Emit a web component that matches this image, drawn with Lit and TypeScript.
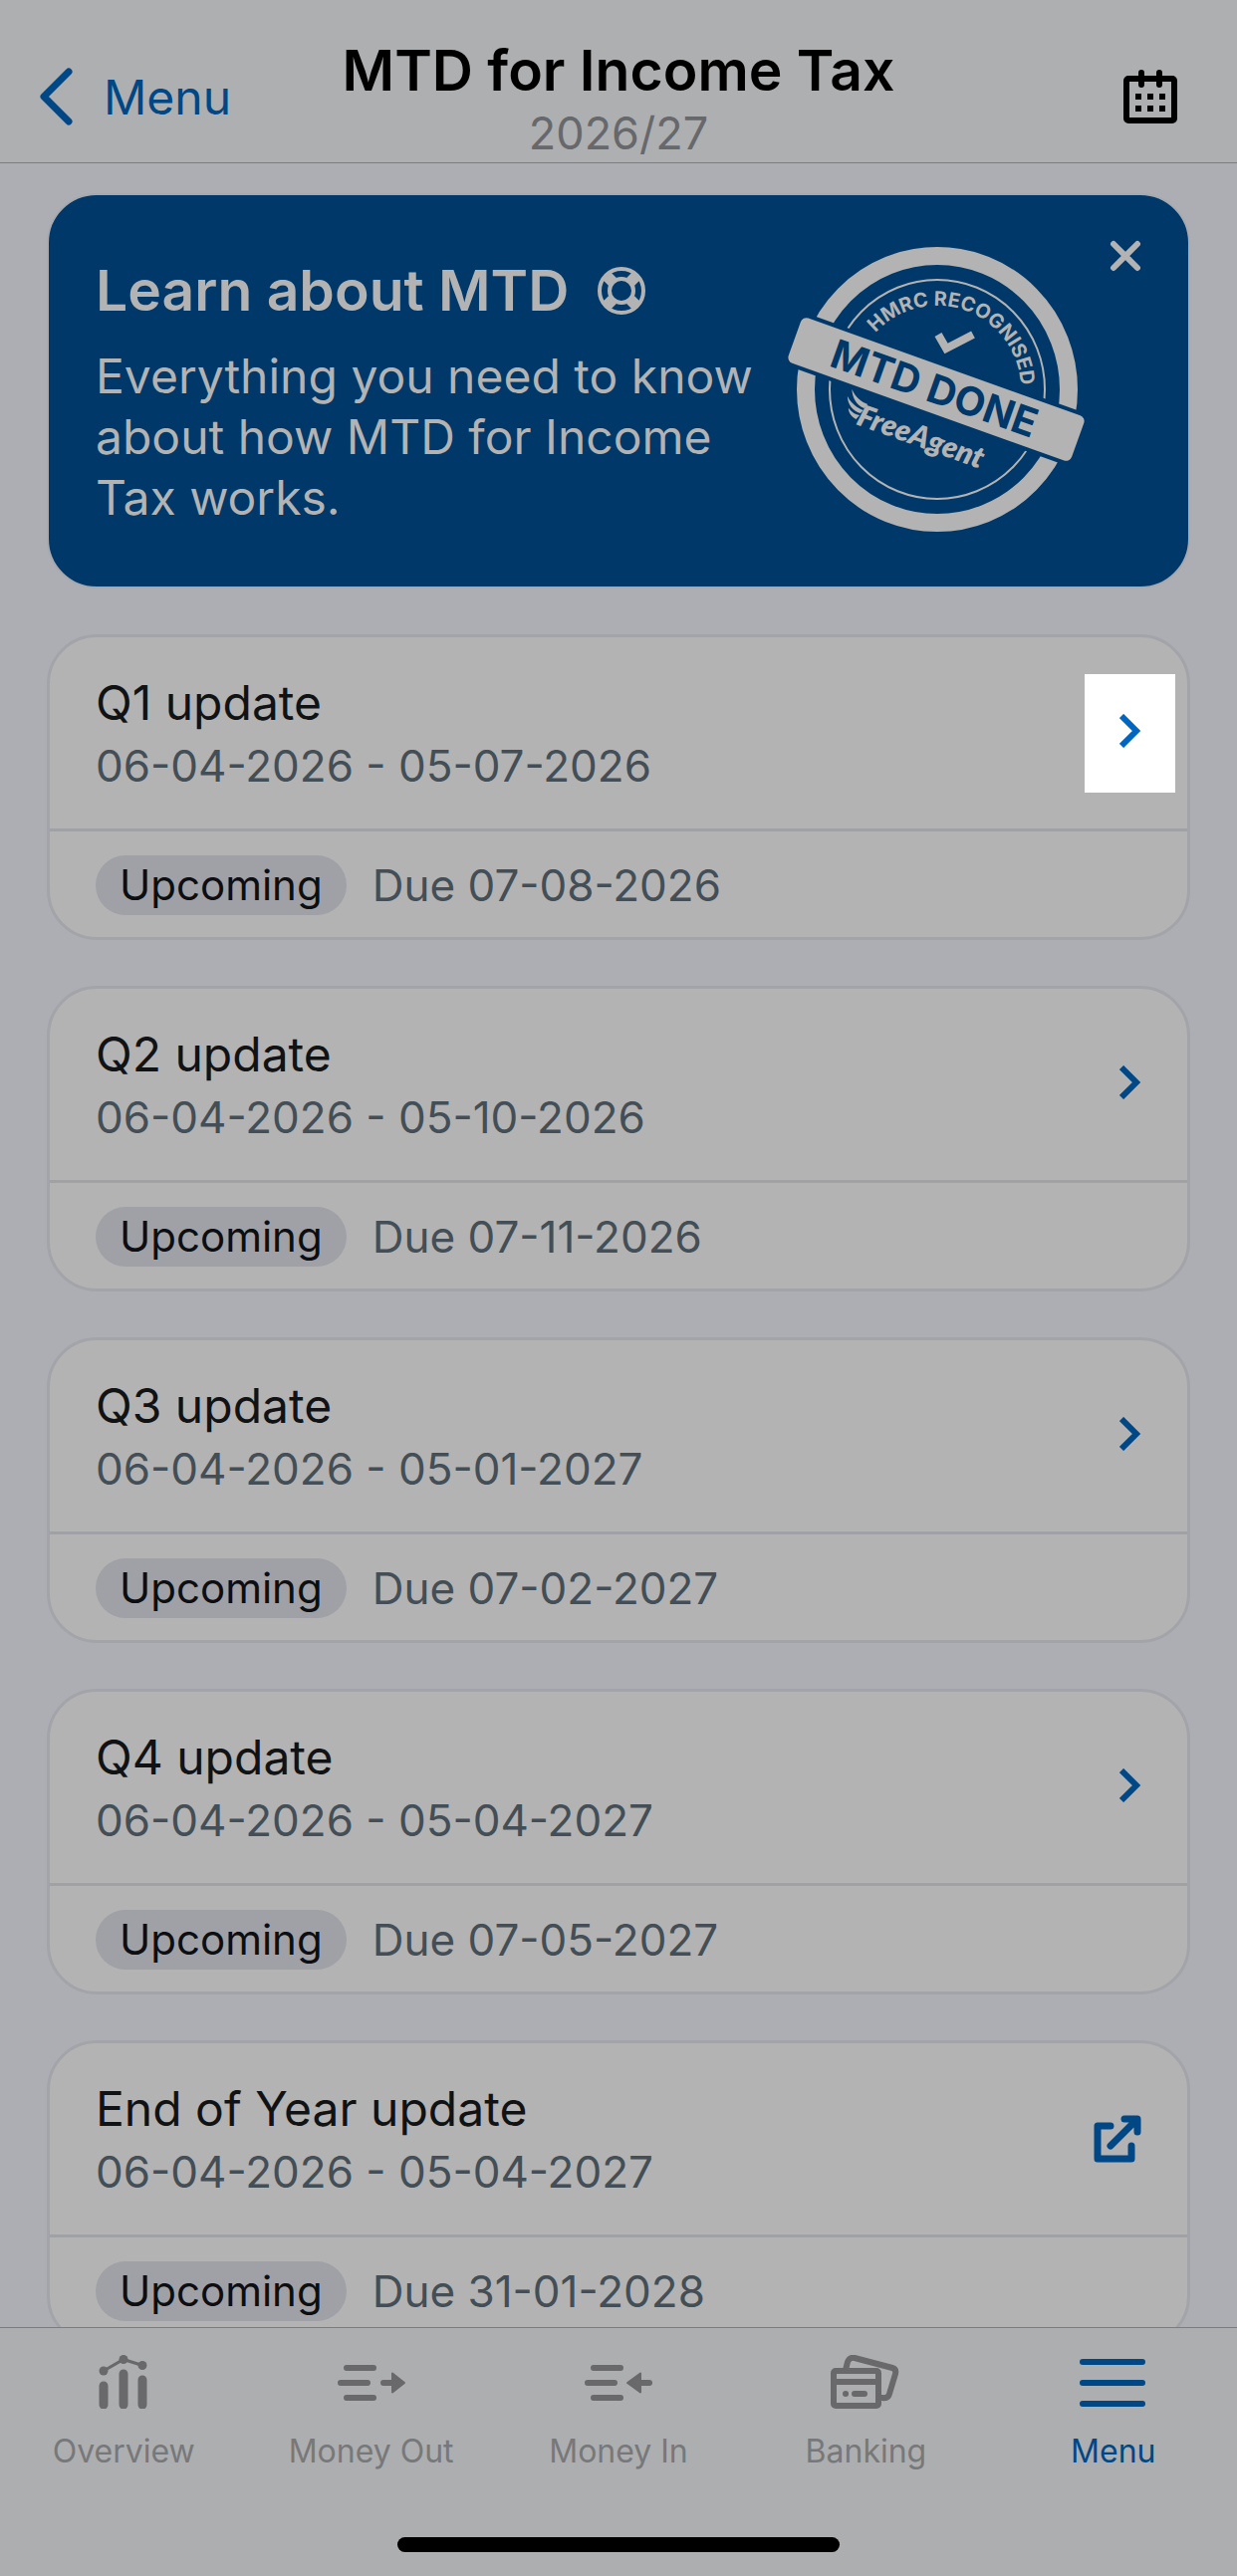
import { css, html, LitElement, svg } from 'lit';
import { customElement, property } from 'lit/decorators.js';

interface Period {
  title: string;
  range: string;
  due: string;
  external?: boolean;
  highlighted?: boolean;
}

const PERIODS: Period[] = [
  { title: 'Q1 update', range: '06-04-2026 - 05-07-2026', due: '07-08-2026', highlighted: true },
  { title: 'Q2 update', range: '06-04-2026 - 05-10-2026', due: '07-11-2026' },
  { title: 'Q3 update', range: '06-04-2026 - 05-01-2027', due: '07-02-2027' },
  { title: 'Q4 update', range: '06-04-2026 - 05-04-2027', due: '07-05-2027' },
  { title: 'End of Year update', range: '06-04-2026 - 05-04-2027', due: '31-01-2028', external: true },
];

const TABS = [
  { id: 'overview', label: 'Overview' },
  { id: 'money-out', label: 'Money Out' },
  { id: 'money-in', label: 'Money In' },
  { id: 'banking', label: 'Banking' },
  { id: 'menu', label: 'Menu' },
];

const moneyLines = svg`
  <path d="M10 13H37M4 28H31M10 43H37" stroke="currentColor" stroke-width="6" stroke-linecap="round" />
`;

const tabIcons: Record<string, unknown> = {
  overview: svg`
    <g fill="none" stroke="currentColor" stroke-linecap="round">
      <path d="M15 31V50M35 19V50M54 25V50" stroke-width="9" />
      <path d="M15 16L35 4.5L54 10.5" stroke-width="3" />
    </g>
    <g fill="currentColor">
      <circle cx="15" cy="16" r="4.5" />
      <circle cx="35" cy="4.5" r="4.5" />
      <circle cx="54" cy="10.5" r="4.5" />
    </g>
  `,
  'money-out': svg`
    ${moneyLines}
    <path d="M47 28H57" stroke="currentColor" stroke-width="6" stroke-linecap="round" />
    <path d="M56 18.5L68 28L56 37.5Z" fill="currentColor" stroke="currentColor" stroke-width="2" stroke-linejoin="round" />
  `,
  'money-in': svg`
    ${moneyLines}
    <path d="M56 28H66" stroke="currentColor" stroke-width="6" stroke-linecap="round" />
    <path d="M57 18.5L44 28L57 37.5Z" fill="currentColor" stroke="currentColor" stroke-width="2" stroke-linejoin="round" />
  `,
  banking: svg`
    <g fill="none" stroke="currentColor" stroke-width="6" stroke-linecap="round" stroke-linejoin="round">
      <rect x="3" y="16" width="45" height="35" rx="2" />
      <path d="M3 27H48" stroke-linecap="butt" />
      <path d="M15 15L17 7Q19 2 24 3L62 13Q66 14 65 19L59 39Q58 44 52 43H50" stroke-linecap="butt" />
      <path d="M15 39H15.1M24 39H34" />
    </g>
  `,
  menu: svg`
    <path d="M4 7H64M4 28H64M4 49H64" stroke="currentColor" stroke-width="6" stroke-linecap="round" />
  `,
};

@customElement('mtd-stamp')
export class MtdStamp extends LitElement {
  static styles = css`
    :host {
      display: block;
    }
    svg {
      display: block;
      width: 100%;
    }
    .paper {
      fill: #b3b3b3;
    }
    .ink {
      fill: #003869;
    }
    text {
      font-family: Inter, sans-serif;
      font-weight: 700;
    }
    .ring-text {
      font-size: 20px;
    }
    .band-text {
      font-size: 40px;
    }
    .brand {
      font-family: Lato, sans-serif;
      font-size: 30px;
      font-style: italic;
      font-weight: 800;
    }
  `;

  render() {
    return html`
      <svg viewBox="0 0 302 288" role="img" aria-label="HMRC recognised, MTD done, FreeAgent">
        <defs>
          <path id="arc" d="M67 144A84 84 0 1 1 235 144" />
        </defs>
        <g fill="none" stroke="#b3b3b3">
          <ellipse cx="151" cy="144" rx="132" ry="134" stroke-width="18" />
          <ellipse cx="151" cy="144" rx="108" ry="110" stroke-width="2" />
        </g>
        <text class="paper ring-text">
          <textPath href="#arc" startOffset="62">HMRC RECOGNISED</textPath>
        </text>
        <path d="M152 89L160 103L187 89" fill="none" stroke="#b3b3b3" stroke-width="8" />
        <g transform="translate(150 144) rotate(19.7)">
          <rect class="ink" x="-150" y="-28" width="300" height="56" />
          <rect class="paper" x="-151" y="-24" width="302" height="48" rx="6" />
          <text class="ink band-text" text-anchor="middle" x="-2" y="14">MTD DONE</text>
        </g>
        <g class="paper" transform="translate(72 161) rotate(19.7)">
          <path d="M-12 -14C-6 -7 2 -5 8 -5L6 0C-2 0 -9 -6 -12 -14Z" />
          <path d="M-14 -6C-8 0 0 2 6 2L4 6C-4 6 -11 2 -14 -6Z" />
          <path d="M-9 5C-4 8 0 9 4 8L2 13C-3 12 -7 10 -9 5Z" />
          <text class="brand" x="3" y="18">FreeAgent</text>
        </g>
      </svg>
    `;
  }
}

@customElement('update-card')
export class UpdateCard extends LitElement {
  static styles = css`
    :host {
      display: block;
      flex: none;
      border: 3px solid #a3a4a9;
      border-radius: 50px;
      background: #b3b3b3;
      overflow: hidden;
    }
    .head {
      display: flex;
      justify-content: space-between;
      align-items: center;
      min-height: 192px;
      padding: 0 12px 0 46px;
    }
    h2 {
      margin: 0;
      font-size: 48px;
      line-height: 66px;
      font-weight: 400;
      color: #111213;
    }
    p {
      margin: 0;
      font-size: 44px;
      line-height: 60px;
      color: #434e56;
    }
    button {
      display: flex;
      justify-content: flex-end;
      align-items: center;
      box-sizing: border-box;
      width: 91px;
      height: 119px;
      border: none;
      padding: 0 34px 0 0;
      background: none;
      color: #004786;
    }
    button.chevron {
      padding-bottom: 5px;
    }
    button.highlighted {
      background: #fff;
      color: #0066bf;
    }
    .foot {
      display: flex;
      align-items: center;
      gap: 26px;
      border-top: 3px solid #a0a1a4;
      padding: 24px 46px 22px;
    }
    .badge {
      border-radius: 30px;
      padding: 0 24px;
      background: #a0a1a6;
      font-size: 42px;
      line-height: 60px;
      color: #0d0e11;
    }
  `;

  @property({ attribute: false }) period!: Period;

  renderIcon() {
    if (this.period.external) {
      return html`
        <svg width="48" height="48" viewBox="0 0 48 48" fill="none" stroke="currentColor" stroke-width="7" stroke-linecap="round" stroke-linejoin="round">
          <path d="M17 11H4V44H38V31M17 31L43 5M31 4H44V17" />
        </svg>
      `;
    }
    return html`
      <svg width="22" height="34" viewBox="0 0 22 34" fill="none" stroke="currentColor" stroke-width="6">
        <path d="M2 2L17 17L2 32" />
      </svg>
    `;
  }

  render() {
    const { title, range, due, external, highlighted } = this.period;
    return html`
      <div class="head">
        <div>
          <h2>${title}</h2>
          <p>${range}</p>
        </div>
        <button
          class="${external ? 'external' : 'chevron'} ${highlighted ? 'highlighted' : ''}"
          aria-label="Open ${title}"
        >
          ${this.renderIcon()}
        </button>
      </div>
      <div class="foot">
        <span class="badge">Upcoming</span>
        <p>Due ${due}</p>
      </div>
    `;
  }
}

@customElement('app-root')
export class AppRoot extends LitElement {
  static styles = css`
    :host {
      display: flex;
      flex-direction: column;
      height: 100vh;
      background: #adaeb3;
      font-family: Inter, sans-serif;
    }
    button {
      border: none;
      padding: 0;
      background: none;
      font: inherit;
      color: inherit;
    }
    svg {
      display: block;
    }
    header {
      flex: none;
      display: grid;
      grid-template-columns: 1fr auto 1fr;
      border-bottom: 1px solid #7c7d86;
      padding: 36px 0 1px;
      background: #aeafb1;
    }
    .back {
      display: flex;
      align-items: center;
      gap: 30px;
      justify-self: start;
      height: 122px;
      padding-left: 40px;
      font-size: 48px;
      color: #004786;
    }
    .heading {
      text-align: center;
    }
    h1 {
      margin: 0;
      font-size: 57px;
      line-height: 70px;
      font-weight: 600;
      color: #000;
    }
    .heading p {
      margin: 0;
      font-size: 45px;
      line-height: 56px;
      color: #67686b;
    }
    .calendar {
      justify-self: end;
      height: 122px;
      padding-right: 60px;
    }
    main {
      flex: 1;
      min-height: 0;
      display: flex;
      flex-direction: column;
      gap: 46px;
      padding: 30px 47px 0;
      overflow: hidden;
    }
    .banner {
      flex: none;
      display: flex;
      align-items: flex-start;
      border: 2px solid #a6a9ae;
      border-radius: 50px;
      padding: 59px 47px 54px;
      background: #003869;
      color: #b3b3b3;
    }
    .banner-text {
      flex: 1;
    }
    .banner h2 {
      display: flex;
      align-items: center;
      gap: 29px;
      margin: 0 0 18px;
      font-size: 57px;
      line-height: 74px;
      font-weight: 600;
    }
    .banner p {
      margin: 0;
      font-size: 48px;
      line-height: 61px;
    }
    mtd-stamp {
      width: 302px;
      margin-top: -8px;
    }
    .close {
      margin: -14px 0 0 22px;
    }
    footer {
      flex: none;
      border-top: 1px solid #7b7c7f;
      padding: 27px 0 24px;
      background: #adaeb0;
    }
    nav {
      display: grid;
      grid-template-columns: repeat(5, 1fr);
    }
    nav a {
      display: flex;
      flex-direction: column;
      align-items: center;
      gap: 22px;
      font-size: 32px;
      line-height: 42px;
      text-decoration: none;
      color: #77787a;
    }
    nav a svg {
      color: #69696b;
    }
    nav a.current,
    nav a.current svg {
      color: #004786;
    }
    .home-indicator {
      width: 444px;
      height: 15px;
      border-radius: 8px;
      margin: 65px auto 0;
      background: #000;
    }
  `;

  render() {
    return html`
      <header>
        <button class="back">
          <svg width="34" height="58" viewBox="0 0 34 58" fill="none" stroke="currentColor" stroke-width="7" stroke-linecap="round" stroke-linejoin="round">
            <path d="M29 4L4 29L29 54" />
          </svg>
          Menu
        </button>
        <div class="heading">
          <h1>MTD for Income Tax</h1>
          <p>2026/27</p>
        </div>
        <button class="calendar" aria-label="Choose tax year">
          <svg width="54" height="54" viewBox="0 0 54 54">
            <rect x="3" y="9" width="48" height="42" rx="2" fill="none" stroke="#000" stroke-width="6" />
            <path d="M18 3V15M36 3V15" stroke="#000" stroke-width="6" stroke-linecap="round" />
            <path d="M12 27H42M12 39H42" stroke="#000" stroke-width="6" stroke-dasharray="6" />
          </svg>
        </button>
      </header>
      <main>
        <section class="banner">
          <div class="banner-text">
            <h2>
              Learn about MTD
              <svg width="48" height="48" viewBox="0 0 48 48" fill="none" stroke="currentColor">
                <circle cx="24" cy="24" r="22" stroke-width="4" />
                <circle cx="24" cy="24" r="12" stroke-width="4" />
                <path d="M9 9L15 15M33 33L39 39M39 9L33 15M15 33L9 39" stroke-width="11" />
              </svg>
            </h2>
            <p>Everything you need to know about how MTD for Income Tax works.</p>
          </div>
          <mtd-stamp></mtd-stamp>
          <button class="close" aria-label="Dismiss">
            <svg width="32" height="32" viewBox="0 0 32 32" stroke="currentColor" stroke-width="6" stroke-linecap="round">
              <path d="M4 4L28 28M28 4L4 28" />
            </svg>
          </button>
        </section>
        ${PERIODS.map((period) => html`<update-card .period=${period}></update-card>`)}
      </main>
      <footer>
        <nav>
          ${TABS.map(
            ({ id, label }) => html`
              <a href="#${id}" class=${id === 'menu' ? 'current' : ''}>
                <svg width="70" height="54" viewBox="0 0 70 54">${tabIcons[id]}</svg>
                ${label}
              </a>
            `
          )}
        </nav>
        <div class="home-indicator"></div>
      </footer>
    `;
  }
}
